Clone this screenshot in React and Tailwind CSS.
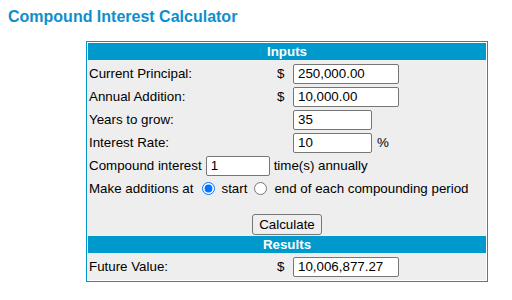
import React, { useState } from 'react';

const inputClass = 'h-[20px] border border-[#767676] rounded-[2px] bg-white px-[3px] text-[13.33px] text-black outline-none';

// --- Label / $ / input row ---
const MoneyRow = ({ label, value, dollar = true, width = 'w-[106px]', suffix }) => (
    <div className="flex items-center h-[23px]">
        <div className="w-[189px] pl-px">{label}</div>
        <div className="w-[16px]">{dollar ? '$' : ''}</div>
        <input type="text" defaultValue={value} className={`${inputClass} ${width} pl-[4px]`} />
        {suffix && <span className="ml-[5px]">{suffix}</span>}
    </div>
);

const SectionHeader = ({ children }) => (
    <div className="h-[17px] bg-[#0099cc] text-white font-bold text-center leading-[17px]">
        {children}
    </div>
);

const App = () => {
    const [when, setWhen] = useState('start');

    return (
        <div className="w-[512px] h-[300px] bg-white text-[13.33px] text-black" style={{ fontFamily: '"Liberation Sans", Arial, sans-serif' }}>
            <h1 className="pl-2 pt-[8px] text-[16px] leading-[18px] font-bold text-[#0d8fcc]">
                Compound Interest Calculator
            </h1>

            {/* Calculator box */}
            <div className="ml-[86px] mt-[15px] w-[402px] border border-[#0099cc] bg-white p-px">
                <div className="bg-[#eeeeee]">
                    <SectionHeader>Inputs</SectionHeader>
                    <div className="pt-[2px]">
                        <MoneyRow label="Current Principal:" value="250,000.00" />
                        <MoneyRow label="Annual Addition:" value="10,000.00" />
                        <MoneyRow label="Years to grow:" value="35" dollar={false} width="w-[79px]" />
                        <MoneyRow label="Interest Rate:" value="10" dollar={false} width="w-[79px]" suffix="%" />
                        <div className="flex items-center h-[23px] pl-px">
                            <span>Compound interest</span>
                            <input type="text" defaultValue="1" className={`${inputClass} w-[64px] ml-[4px] mr-[4px] pl-[4px]`} />
                            <span>time(s) annually</span>
                        </div>
                        <div className="flex items-center h-[23px] pl-px">
                            <span>Make additions at</span>
                            <input
                                type="radio"
                                name="when"
                                checked={when === 'start'}
                                onChange={() => setWhen('start')}
                                className="ml-[9px] mr-[6px] w-[13px] h-[13px]"
                            />
                            <span>start</span>
                            <input
                                type="radio"
                                name="when"
                                checked={when === 'end'}
                                onChange={() => setWhen('end')}
                                className="ml-[7px] mr-[7px] w-[13px] h-[13px]"
                            />
                            <span>end of each compounding period</span>
                        </div>
                        <div className="h-[13px]" />
                        <div className="flex justify-center h-[23px] items-start pt-px">
                            <button className="w-[70px] h-[21px] border border-[#767676] rounded-[3px] bg-[#efefef] text-[13.33px]">
                                Calculate
                            </button>
                        </div>
                    </div>
                    <SectionHeader>Results</SectionHeader>
                    <div className="pt-[2px] pb-[2px]">
                        <MoneyRow label="Future Value:" value="10,006,877.27" />
                    </div>
                </div>
            </div>
        </div>
    );
};

export default App;
